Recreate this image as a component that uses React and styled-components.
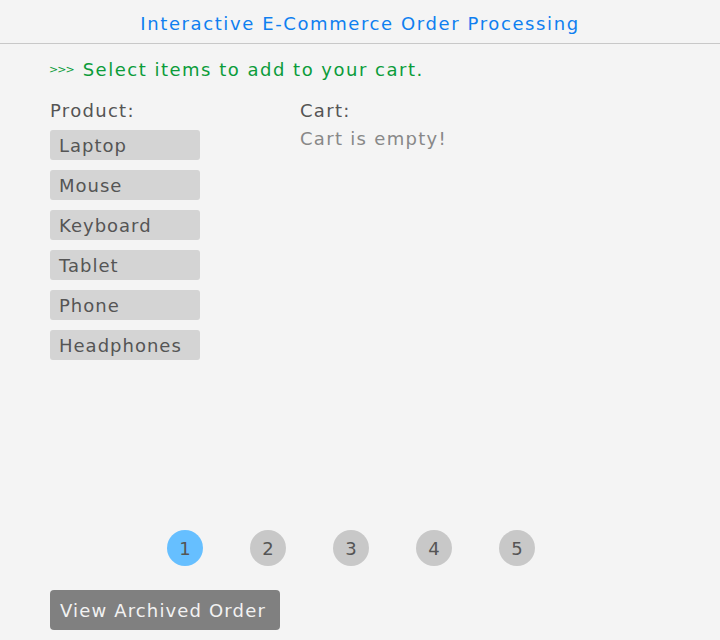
import React, { useState } from 'react'
import styled, { createGlobalStyle } from 'styled-components'

const GlobalStyle = createGlobalStyle`
  html, body {
    margin: 0;
    padding: 0;
    background: #f4f4f4;
  }
  body {
    font-family: 'DejaVu Sans', 'Liberation Sans', sans-serif;
  }
`

const Page = styled.div`
  width: 720px;
  height: 640px;
  display: flex;
  flex-direction: column;
  background: #f4f4f4;
`

const Header = styled.div`
  height: 44px;
  padding-top: 3px;
  border-bottom: 1px solid #c8c8c8;
  display: flex;
  align-items: center;
  justify-content: center;
  color: #0f7ff0;
  font-size: 18px;
  letter-spacing: 1.6px;
  box-sizing: border-box;
`

const Main = styled.div`
  padding: 12px 50px 0 50px;
  flex: 1;
  display: flex;
  flex-direction: column;
`

const Prompt = styled.div`
  color: #0b9c3a;
  font-size: 18px;
  letter-spacing: 1.5px;
  height: 26px;
  display: flex;
  align-items: center;
  margin-left: -1px;
`

const Arrows = styled.span`
  font-size: 11px;
  letter-spacing: -1px;
  margin-right: 9px;
`

const Columns = styled.div`
  display: flex;
  margin-top: 17px;
`

const Column = styled.div`
  width: ${p => p.width || 'auto'};
  display: flex;
  flex-direction: column;
`

const Label = styled.div`
  color: #555;
  font-size: 18px;
  letter-spacing: 1.3px;
  height: 22px;
  display: flex;
  align-items: center;
  margin-bottom: 9px;
`

const Products = styled.div`
  display: flex;
  flex-direction: column;
  gap: 10px;
`

const ProductButton = styled.button`
  width: 150px;
  height: 30px;
  border: none;
  border-radius: 3px;
  background: #d4d4d4;
  color: #555;
  font-family: inherit;
  font-size: 18px;
  letter-spacing: 1px;
  text-align: left;
  padding: 0 0 0 9px;
  cursor: pointer;
`

const Empty = styled.div`
  color: #888;
  font-size: 18px;
  letter-spacing: 1.3px;
  height: 24px;
  margin-top: -4px;
  display: flex;
  align-items: center;
`

const Spacer = styled.div`
  flex: 1;
`

const Pagination = styled.div`
  display: flex;
  gap: 47px;
  padding-left: 117px;
  margin-bottom: 24px;
`

const PageDot = styled.button`
  width: 36px;
  height: 36px;
  border-radius: 50%;
  border: none;
  padding: 0;
  background: ${p => (p.active ? '#66bfff' : '#c8c8c8')};
  color: #555;
  font-family: inherit;
  font-size: 18px;
  display: flex;
  align-items: center;
  justify-content: center;
  cursor: pointer;
`

const ArchiveButton = styled.button`
  width: 230px;
  height: 40px;
  border: none;
  border-radius: 4px;
  background: #808080;
  color: #f2f2f2;
  font-family: inherit;
  font-size: 18px;
  letter-spacing: 1.15px;
  text-align: left;
  padding: 0 0 0 10px;
  margin-bottom: 10px;
  cursor: pointer;
`

const products = ['Laptop', 'Mouse', 'Keyboard', 'Tablet', 'Phone', 'Headphones']

export default function App () {
  const [cart, setCart] = useState([])
  const [page, setPage] = useState(1)

  return (
    <Page>
      <GlobalStyle />
      <Header>Interactive E-Commerce Order Processing</Header>
      <Main>
        <Prompt><Arrows>&gt;&gt;&gt;</Arrows>Select items to add to your cart.</Prompt>
        <Columns>
          <Column width='250px'>
            <Label>Product:</Label>
            <Products>
              {products.map(name => (
                <ProductButton key={name} onClick={() => setCart([...cart, name])}>{name}</ProductButton>
              ))}
            </Products>
          </Column>
          <Column>
            <Label>Cart:</Label>
            {cart.length === 0
              ? <Empty>Cart is empty!</Empty>
              : cart.map((item, i) => <Empty key={i}>{item}</Empty>)}
          </Column>
        </Columns>
        <Spacer />
        <Pagination>
          {[1, 2, 3, 4, 5].map(n => (
            <PageDot key={n} active={n === page} onClick={() => setPage(n)}>{n}</PageDot>
          ))}
        </Pagination>
        <ArchiveButton>View Archived Order</ArchiveButton>
      </Main>
    </Page>
  )
}
